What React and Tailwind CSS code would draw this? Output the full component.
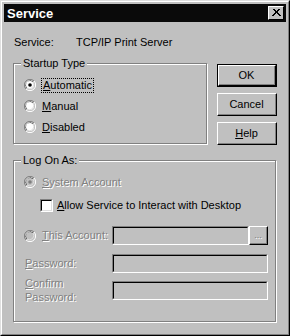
import React from 'react';

const font = { fontFamily: '"Liberation Sans", Arial, sans-serif' };

const Radio = ({ checked, disabled }) => (
  <svg width="12" height="12" viewBox="0 0 12 12" className="shrink-0">
    <path d="M10 2 A5.5 5.5 0 0 0 2 10" fill="none" stroke="#808080" strokeWidth="1" />
    <path d="M9 3 A4.3 4.3 0 0 0 3 9" fill="none" stroke="#000" strokeWidth="1" />
    <circle cx="6" cy="6" r="4" fill={disabled ? '#c0c0c0' : '#fff'} />
    <path d="M2 10 A5.5 5.5 0 0 0 10 2" fill="none" stroke="#fff" strokeWidth="1" />
    <path d="M3 9 A4.3 4.3 0 0 0 9 3" fill="none" stroke="#dfdfdf" strokeWidth="1" />
    {checked && <circle cx="6" cy="6" r="1.8" fill={disabled ? '#808080' : '#000'} />}
  </svg>
);

const Field = ({ className = '' }) => (
  <div className={`h-[19px] shrink-0 border border-t-[#808080] border-l-[#808080] border-b-white border-r-white ${className}`}>
    <div className="h-full border border-t-black border-l-black border-b-[#c0c0c0] border-r-[#c0c0c0] bg-[#c0c0c0]" />
  </div>
);

const Button = ({ children, isDefault }) => (
  <div className={`w-[60px] h-[23px] ${isDefault ? 'border border-black' : ''}`}>
    <div className="h-full border border-t-white border-l-white border-b-black border-r-black">
      <div className="h-full flex items-center justify-center border-b border-r border-[#808080] text-[11px] text-black">
        {children}
      </div>
    </div>
  </div>
);

const Dim = ({ children, className = '' }) => (
  <span className={`text-[#808080] [text-shadow:1px_1px_0_#fff] ${className}`}>{children}</span>
);

export default function App() {
  return (
    <div style={font} className="w-[290px] h-[336px] bg-[#c0c0c0] border border-t-[#dfdfdf] border-l-[#dfdfdf] border-b-black border-r-black">
      <div className="h-full border border-t-white border-l-white border-b-[#808080] border-r-[#808080] p-[2px] flex flex-col">
        {/* title */}
        <div className="h-[18px] bg-[#0a0a0a] flex items-center justify-between pl-[3px] pr-[2px]">
          <span className="text-white font-bold text-[13px] leading-none">Service</span>
          <div className="w-[16px] h-[14px] bg-[#c0c0c0] border border-t-white border-l-white border-b-black border-r-black flex items-center justify-center">
            <svg width="9" height="8" viewBox="0 0 9 8">
              <path d="M1 0 L8 7 M8 0 L1 7 M2 0 L9 7 M7 0 L0 7" stroke="#000" strokeWidth="1" fill="none" />
            </svg>
          </div>
        </div>

        <div className="flex-1 pl-[9px] pr-[8px] text-[11px] text-black">
          <div className="flex items-center h-[18px] mt-[11px]">
            <span className="w-[63px] pl-[1px]">Service:</span>
            <span>TCP/IP Print Server</span>
          </div>

          <div className="flex mt-[12px]">
            {/* startup type */}
            <div className="relative w-[194px] h-[81px] border border-[#808080] shadow-[inset_1px_1px_0_#fff,1px_1px_0_#fff]">
              <span className="absolute -top-[8px] left-[7px] px-[2px] bg-[#c0c0c0] leading-[14px]">Startup Type</span>
              <div className="flex flex-col gap-[7px] pl-[10px] pt-[14px]">
                <div className="flex items-center h-[14px]">
                  <Radio checked />
                  <span className="ml-[5px] px-[1px] border border-dotted border-black leading-[13px]"><u>A</u>utomatic</span>
                </div>
                <div className="flex items-center h-[14px]">
                  <Radio />
                  <span className="ml-[6px]"><u>M</u>anual</span>
                </div>
                <div className="flex items-center h-[14px]">
                  <Radio />
                  <span className="ml-[6px]"><u>D</u>isabled</span>
                </div>
              </div>
            </div>

            <div className="ml-[10px] mt-[1px] flex flex-col gap-[6px]">
              <Button isDefault>OK</Button>
              <Button>Cancel</Button>
              <Button><u>H</u>elp</Button>
            </div>
          </div>

          {/* log on as */}
          <div className="relative w-[263px] h-[162px] mt-[15px] border border-[#808080] shadow-[inset_1px_1px_0_#fff,1px_1px_0_#fff]">
            <span className="absolute -top-[8px] left-[7px] px-[2px] bg-[#c0c0c0] leading-[14px]">Log On As:</span>
            <div className="pl-[10px] pt-[14px]">
              <div className="flex items-center h-[14px]">
                <Radio checked disabled />
                <Dim className="ml-[6px]"><u>S</u>ystem Account</Dim>
              </div>
              <div className="flex items-center h-[14px] mt-[9px] pl-[16px]">
                <div className="w-[13px] h-[13px] border border-t-[#808080] border-l-[#808080] border-b-white border-r-white">
                  <div className="h-full border border-t-black border-l-black border-b-[#dfdfdf] border-r-[#dfdfdf] bg-white" />
                </div>
                <span className="ml-[4px]"><u>A</u>llow Service to Interact with Desktop</span>
              </div>
              <div className="flex items-center mt-[14px]">
                <Radio disabled />
                <Dim className="ml-[6px] w-[70px]"><u>T</u>his Account:</Dim>
                <Field className="w-[137px]" />
                <div className="w-[19px] h-[19px] shrink-0 border border-t-white border-l-white border-b-black border-r-black">
                  <div className="h-full border-b border-r border-[#808080] flex items-end justify-center pb-[3px]">
                    <Dim className="text-[9px] leading-none">...</Dim>
                  </div>
                </div>
              </div>
              <div className="flex items-center mt-[9px]">
                <Dim className="w-[88px] pl-[1px]"><u>P</u>assword:</Dim>
                <Field className="w-[156px]" />
              </div>
              <div className="flex items-start mt-[8px]">
                <Dim className="w-[88px] pl-[1px] leading-[14px] -mt-[5px]"><u>C</u>onfirm<br />Password:</Dim>
                <Field className="w-[156px]" />
              </div>
            </div>
          </div>
        </div>
      </div>
    </div>
  );
}
